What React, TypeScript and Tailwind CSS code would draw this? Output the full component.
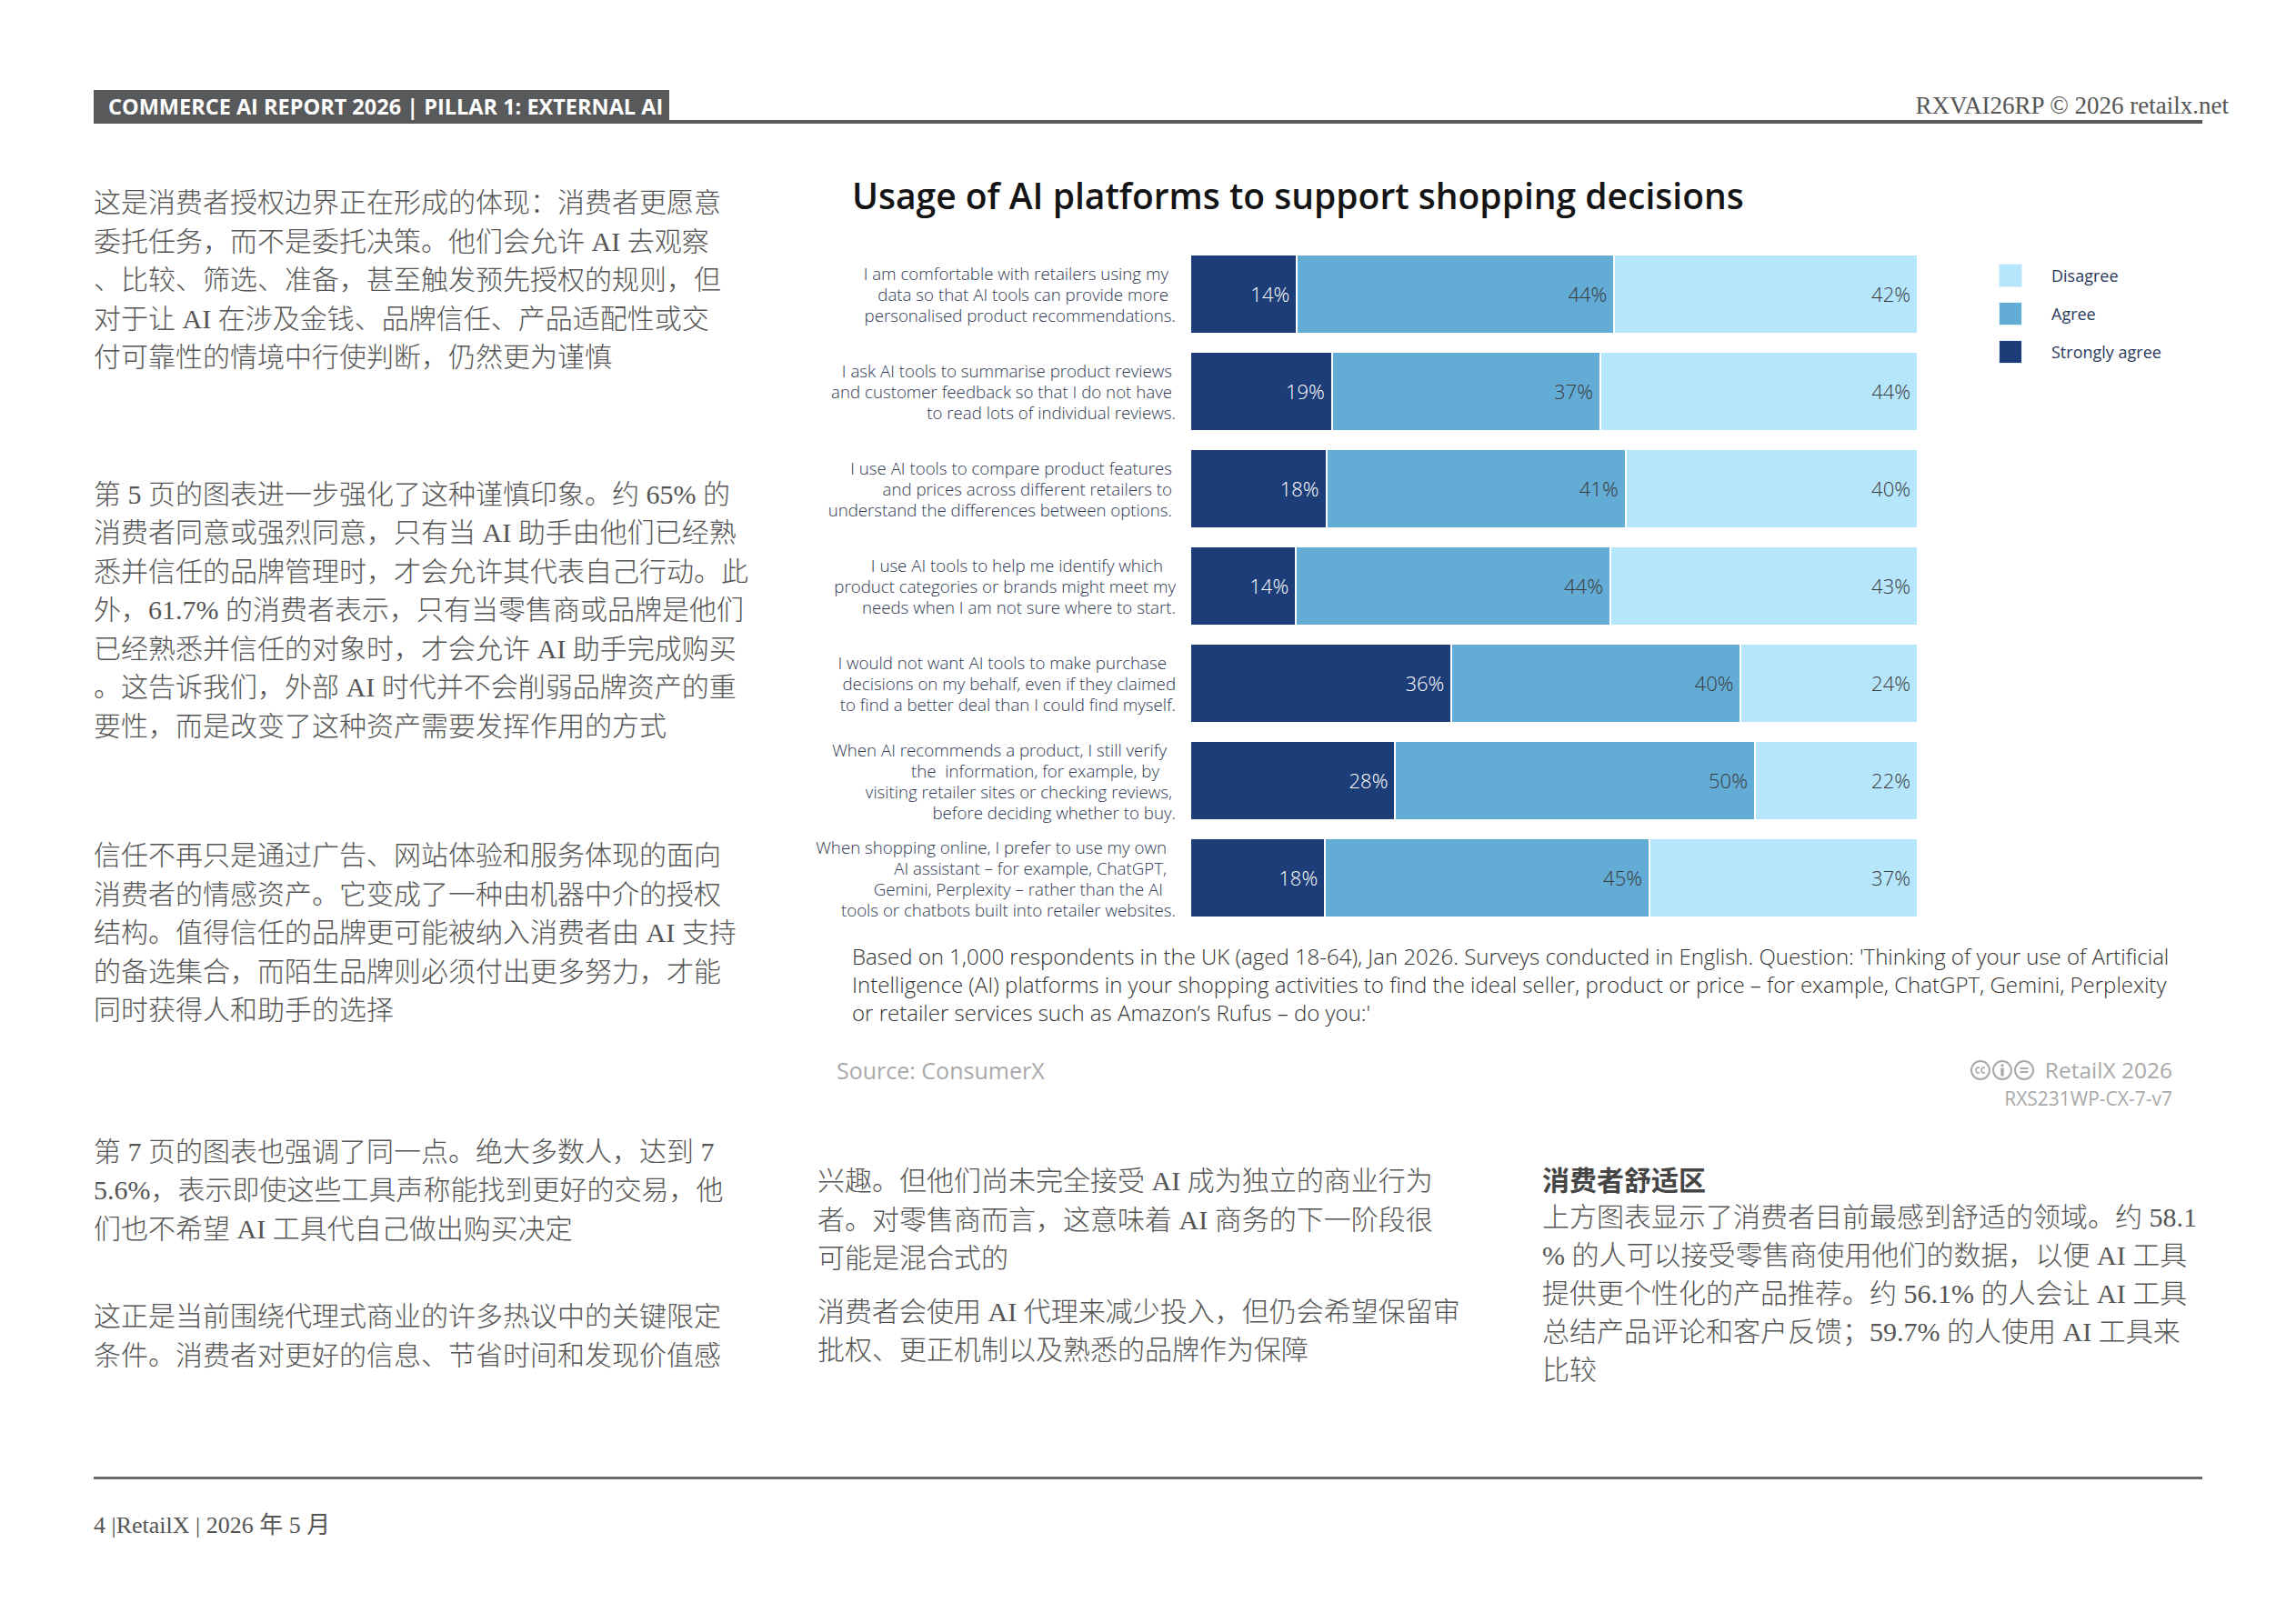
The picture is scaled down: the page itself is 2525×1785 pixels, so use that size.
import React from "react";

type Row = { label: { t: string; pad?: string }[]; v: [number, number, number] };

const rows: Row[] = [
  {
    label: [
      { t: "I am comfortable with retailers using my", pad: "pr-[8px]" },
      { t: "data so that AI tools can provide more", pad: "pr-[8px]" },
      { t: "personalised product recommendations." },
    ],
    v: [14, 44, 42],
  },
  {
    label: [
      { t: "I ask AI tools to summarise product reviews", pad: "pr-[4px]" },
      { t: "and customer feedback so that I do not have", pad: "pr-[4px]" },
      { t: "to read lots of individual reviews." },
    ],
    v: [19, 37, 44],
  },
  {
    label: [
      { t: "I use AI tools to compare product features", pad: "pr-[4px]" },
      { t: "and prices across different retailers to", pad: "pr-[4px]" },
      { t: "understand the differences between options.", pad: "pr-[4px]" },
    ],
    v: [18, 41, 40],
  },
  {
    label: [
      { t: "I use AI tools to help me identify which", pad: "pr-[14px]" },
      { t: "product categories or brands might meet my" },
      { t: "needs when I am not sure where to start." },
    ],
    v: [14, 44, 43],
  },
  {
    label: [
      { t: "I would not want AI tools to make purchase", pad: "pr-[10px]" },
      { t: "decisions on my behalf, even if they claimed" },
      { t: "to find a better deal than I could find myself." },
    ],
    v: [36, 40, 24],
  },
  {
    label: [
      { t: "When AI recommends a product, I still verify", pad: "pr-[10px]" },
      { t: "the  information, for example, by", pad: "pr-[18px]" },
      { t: "visiting retailer sites or checking reviews,", pad: "pr-[4px]" },
      { t: "before deciding whether to buy." },
    ],
    v: [28, 50, 22],
  },
  {
    label: [
      { t: "When shopping online, I prefer to use my own", pad: "pr-[10px]" },
      { t: "AI assistant – for example, ChatGPT,", pad: "pr-[10px]" },
      { t: "Gemini, Perplexity – rather than the AI", pad: "pr-[14px]" },
      { t: "tools or chatbots built into retailer websites." },
    ],
    v: [18, 45, 37],
  },
];

const leftParas: { mt: string; lines: string[] }[] = [
  {
    mt: "mt-0",
    lines: [
      "这是消费者授权边界正在形成的体现：消费者更愿意",
      "委托任务，而不是委托决策。他们会允许 AI 去观察",
      "、比较、筛选、准备，甚至触发预先授权的规则，但",
      "对于让 AI 在涉及金钱、品牌信任、产品适配性或交",
      "付可靠性的情境中行使判断，仍然更为谨慎",
    ],
  },
  {
    mt: "mt-[108px]",
    lines: [
      "第 5 页的图表进一步强化了这种谨慎印象。约 65% 的",
      "消费者同意或强烈同意，只有当 AI 助手由他们已经熟",
      "悉并信任的品牌管理时，才会允许其代表自己行动。此",
      "外，61.7% 的消费者表示，只有当零售商或品牌是他们",
      "已经熟悉并信任的对象时，才会允许 AI 助手完成购买",
      "。这告诉我们，外部 AI 时代并不会削弱品牌资产的重",
      "要性，而是改变了这种资产需要发挥作用的方式",
    ],
  },
  {
    mt: "mt-[100px]",
    lines: [
      "信任不再只是通过广告、网站体验和服务体现的面向",
      "消费者的情感资产。它变成了一种由机器中介的授权",
      "结构。值得信任的品牌更可能被纳入消费者由 AI 支持",
      "的备选集合，而陌生品牌则必须付出更多努力，才能",
      "同时获得人和助手的选择",
    ],
  },
  {
    mt: "mt-[113px]",
    lines: [
      "第 7 页的图表也强调了同一点。绝大多数人，达到 7",
      "5.6%，表示即使这些工具声称能找到更好的交易，他",
      "们也不希望 AI 工具代自己做出购买决定",
    ],
  },
  {
    mt: "mt-[54px]",
    lines: [
      "这正是当前围绕代理式商业的许多热议中的关键限定",
      "条件。消费者对更好的信息、节省时间和发现价值感",
    ],
  },
];

function Lines({ lines }: { lines: string[] }) {
  return (
    <>
      {lines.map((l, i) => (
        <div key={i} className="whitespace-pre">
          {l}
        </div>
      ))}
    </>
  );
}

function CcIcons() {
  return (
    <svg width="70" height="24" viewBox="0 0 70 24" fill="none" stroke="#a9a9a9" strokeWidth="2">
      <circle cx="11" cy="12" r="10" />
      <path d="M10 9.2a3 3 0 1 0 0 5.6M16 9.2a3 3 0 1 0 0 5.6" strokeWidth="1.6" />
      <circle cx="35" cy="12" r="10" />
      <circle cx="35" cy="6.6" r="1.6" fill="#a9a9a9" stroke="none" />
      <path d="M35 9.5v9" strokeWidth="3.4" />
      <circle cx="59" cy="12" r="10" />
      <path d="M54.5 10h9M54.5 14h9" strokeWidth="1.8" />
    </svg>
  );
}

function Chart() {
  return (
    <div className="flex flex-col font-['Open_Sans',sans-serif]">
      <h2 className="ml-[38px] mt-[53px] text-[39px] leading-[52px] font-semibold text-[#141414]">
        Usage of AI platforms to support shopping decisions
      </h2>
      <div className="mt-[40px] flex">
        <div className="flex flex-col gap-[22px]">
          {rows.map((r, i) => (
            <div key={i} className="flex items-center h-[85px]">
              <div className="w-[394px] flex flex-col items-end text-[18.7px] leading-[23px] font-light text-[#2e3852]">
                {r.label.map((l, j) => (
                  <div key={j} className={`whitespace-pre ${l.pad ?? ""}`}>
                    {l.t}
                  </div>
                ))}
              </div>
              <div className="ml-[17px] w-[798px] h-full flex text-[22px] font-light">
                <div
                  className="bg-[#1c3d77] text-white flex items-center justify-end pr-[7px]"
                  style={{ flexGrow: r.v[0], flexBasis: 0 }}
                >
                  {r.v[0]}%
                </div>
                <div
                  className="bg-[#63acd6] border-l-2 border-white text-[#3a3a3a] flex items-center justify-end pr-[7px]"
                  style={{ flexGrow: r.v[1], flexBasis: 0 }}
                >
                  {r.v[1]}%
                </div>
                <div
                  className="bg-[#b6e6fc] border-l-2 border-white text-[#3a3a3a] flex items-center justify-end pr-[7px]"
                  style={{ flexGrow: r.v[2], flexBasis: 0 }}
                >
                  {r.v[2]}%
                </div>
              </div>
            </div>
          ))}
        </div>
        <div className="ml-[90px] mt-[9px] flex flex-col gap-[16px] text-[18px] text-[#2b3a5c]">
          {[
            ["bg-[#b6e6fc]", "Disagree"],
            ["bg-[#63acd6]", "Agree"],
            ["bg-[#1c3d77]", "Strongly agree"],
          ].map(([c, t]) => (
            <div key={t} className="flex items-center h-[26px]">
              <div className={`w-[26px] h-[26px] ${c} border border-[#e4f4fc]`} />
              <span className="ml-[32px]">{t}</span>
            </div>
          ))}
        </div>
      </div>
      <div className="ml-[38px] mt-[28px] text-[24px] leading-[31px] font-light text-[#333]">
        <div className="whitespace-nowrap">
          Based on 1,000 respondents in the UK (aged 18-64), Jan 2026. Surveys conducted in English. Question: 'Thinking of your use of Artificial
        </div>
        <div className="whitespace-nowrap">
          Intelligence (AI) platforms in your shopping activities to find the ideal seller, product or price – for example, ChatGPT, Gemini, Perplexity
        </div>
        <div className="whitespace-nowrap">or retailer services such as Amazon’s Rufus – do you:'</div>
      </div>
      <div className="mt-[33px] flex justify-between items-start mr-[44px]">
        <div className="ml-[21px] text-[25px] leading-[30px] text-[#a9a9a9]">Source: ConsumerX</div>
        <div className="flex flex-col items-end text-[#a9a9a9]">
          <div className="flex items-center h-[30px] gap-[12px]">
            <CcIcons />
            <span className="text-[24.5px] font-medium">RetailX 2026</span>
          </div>
          <div className="mt-[3px] text-[21px] leading-[27px] font-medium">RXS231WP-CX-7-v7</div>
        </div>
      </div>
    </div>
  );
}

export default function App() {
  const cjk =
    "font-['Liberation_Serif','Noto_Sans_CJK_SC',serif] font-light text-[30px] leading-[42.5px] text-[#555555]";
  return (
    <div className="w-[2525px] h-[1785px] bg-white flex flex-col pl-[103px] pr-[92px] pb-[92px] overflow-hidden">
      {/* header */}
      <div className="pt-[99px] flex items-end">
        <div className="h-[37px] w-[633px] bg-[#58595b] flex items-center pl-[16px] text-white text-[23.5px] font-bold font-['Open_Sans',sans-serif] whitespace-nowrap">
          COMMERCE AI REPORT 2026 | PILLAR 1: EXTERNAL AI
        </div>
        <div className="flex-1 flex flex-col -mr-[18px]">
          <div className="self-end text-[27px] leading-[30px] text-[#555] font-['Liberation_Serif',serif] whitespace-nowrap mb-[1px]">
            RXVAI26RP © 2026 retailx.net
          </div>
          <div className="h-[4px] bg-[#5a5a5e] mr-[29px]" />
        </div>
      </div>

      <div className="flex flex-1">
        {/* left column */}
        <div className={`w-[796px] pt-[66px] ${cjk}`}>
          {leftParas.map((p, i) => (
            <div key={i} className={p.mt}>
              <Lines lines={p.lines} />
            </div>
          ))}
        </div>

        {/* right area */}
        <div className="flex-1 flex flex-col">
          <Chart />
          <div className={`mt-[58px] flex ${cjk}`}>
            <div className="w-[797px] -mt-[2px]">
              <Lines
                lines={[
                  "兴趣。但他们尚未完全接受 AI 成为独立的商业行为",
                  "者。对零售商而言，这意味着 AI 商务的下一阶段很",
                  "可能是混合式的",
                ]}
              />
              <div className="mt-[16px]">
                <Lines
                  lines={[
                    "消费者会使用 AI 代理来减少投入，但仍会希望保留审",
                    "批权、更正机制以及熟悉的品牌作为保障",
                  ]}
                />
              </div>
            </div>
            <div className="flex-1">
              <div className="font-bold leading-[38px] text-[#454545]">消费者舒适区</div>
              <div className="leading-[42px]">
                <Lines
                  lines={[
                    "上方图表显示了消费者目前最感到舒适的领域。约 58.1",
                    "% 的人可以接受零售商使用他们的数据，以便 AI 工具",
                    "提供更个性化的产品推荐。约 56.1% 的人会让 AI 工具",
                    "总结产品评论和客户反馈；59.7% 的人使用 AI 工具来",
                    "比较",
                  ]}
                />
              </div>
            </div>
          </div>
        </div>
      </div>

      {/* footer */}
      <div className="h-[3px] w-[2319px] bg-[#6b6b6b]" />
      <div className="mt-[36px] leading-[30px] text-[26px] text-[#555] font-['Liberation_Serif','Noto_Sans_CJK_SC',serif]">
        4 |RetailX | 2026 年 5 月
      </div>
    </div>
  );
}
